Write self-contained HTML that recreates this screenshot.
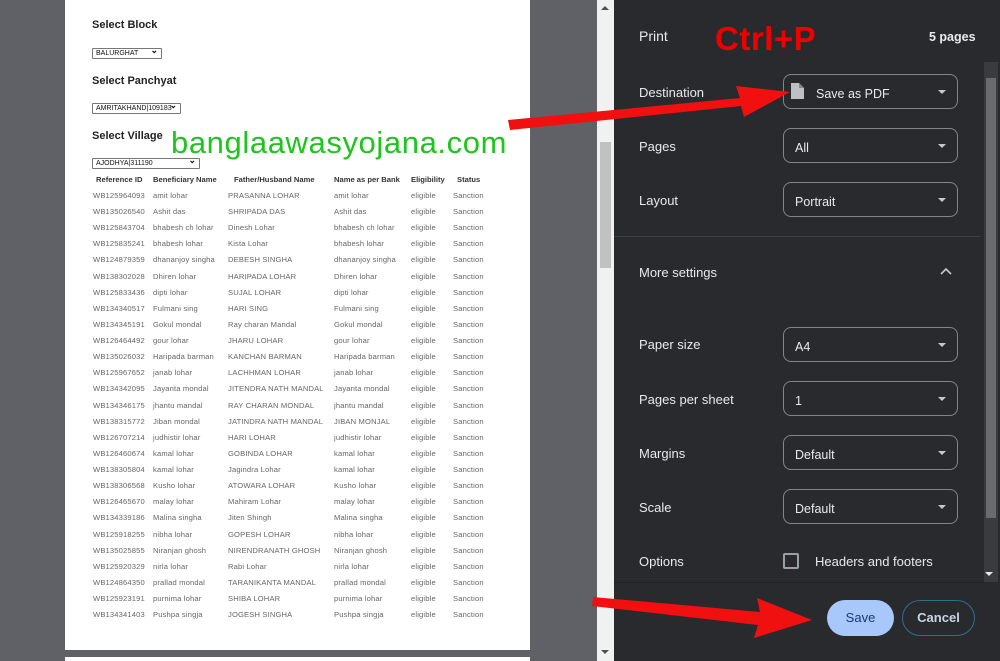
<!DOCTYPE html>
<html><head><meta charset="utf-8"><style>
*{margin:0;padding:0;box-sizing:border-box}
body{width:1000px;height:661px;position:relative;overflow:hidden;background:#5f6167;font-family:"Liberation Sans",sans-serif}
.a{position:absolute}
.page{left:65px;top:0;width:465px;height:650px;background:#fff}
.h{font-weight:bold;font-size:11px;color:#222;left:92px}
.sel{border:1px solid #777;font-size:7px;height:11px;line-height:9px;padding-left:3px;color:#111;background:#fff;left:92px;border-radius:1px}
.sel:after{content:"⌄";position:absolute;right:3px;top:-3px;font-size:9px;font-weight:bold}
.t{font-size:7.6px;color:#666;white-space:nowrap;letter-spacing:.15px}
.th{font-size:7.6px;color:#333;font-weight:bold;white-space:nowrap}
.panel{left:614px;top:0;width:386px;height:661px;background:#292a2d}
.lbl{color:#e8eaed;font-size:13px;left:639px}
.box{left:783px;width:175px;height:35px;border:1px solid #80868b;border-radius:8px;color:#e8eaed;font-size:12.5px;padding:12px 0 0 11px}
.box:after{content:"";position:absolute;right:11px;top:15px;border-left:4px solid transparent;border-right:4px solid transparent;border-top:4px solid #c8c8c8}
</style></head><body>
<div class="a page"></div>
<div class="a" style="left:65px;top:657px;width:465px;height:4px;background:#fff"></div>
<div class="a h" style="top:19px">Select Block</div>
<div class="a sel" style="top:48px;width:70px">BALURGHAT</div>
<div class="a h" style="top:75px">Select Panchyat</div>
<div class="a sel" style="top:103px;width:89px">AMRITAKHAND|109183</div>
<div class="a h" style="top:130px">Select Village</div>
<div class="a sel" style="top:158px;width:108px">AJODHYA|311190</div>
<div class="a" style="left:171px;top:125px;font-size:31px;color:#1fc41f;letter-spacing:0.6px">banglaawasyojana.com</div>
<div id="tbl"></div>
<div class="a" style="left:597px;top:0;width:17px;height:661px;background:#f1f1f1"></div>
<div class="a" style="left:600px;top:142px;width:11px;height:126px;background:#c1c1c1"></div>
<div class="a" style="left:601px;top:6px;border-left:4px solid transparent;border-right:4px solid transparent;border-bottom:4px solid #505050"></div>
<div class="a" style="left:601px;top:650px;border-left:4px solid transparent;border-right:4px solid transparent;border-top:4px solid #505050"></div>
<div class="a panel"></div>
<div class="a" style="left:984px;top:62px;width:14px;height:520px;background:#3a3b3e"></div>
<div class="a" style="left:986px;top:78px;width:10px;height:440px;background:#6a6b6e"></div>
<div class="a" style="left:614px;top:236px;width:366px;height:1px;background:#3c4043"></div>
<div class="a" style="left:614px;top:582px;width:370px;height:1px;background:#202124"></div>
<div class="a lbl" style="top:28px;font-size:14px">Print</div>
<div class="a" style="left:715px;top:20px;font-size:33px;color:#e00;font-weight:bold;letter-spacing:0.5px">Ctrl+P</div>
<div class="a" style="left:929px;top:30px;color:#e8eaed;font-size:12.5px;font-weight:bold">5 pages</div>
<div class="a lbl" style="top:85px">Destination</div>
<div class="a box" style="top:74px;padding-left:32px">Save as PDF</div>
<svg class="a" style="left:791px;top:83px" width="13" height="16"><path d="M0 0H8L13 5V16H0Z" fill="#bdc1c6"/><path d="M8 0V5H13" fill="#888"/></svg>
<div class="a lbl" style="top:139px">Pages</div>
<div class="a box" style="top:128px">All</div>
<div class="a lbl" style="top:193px">Layout</div>
<div class="a box" style="top:182px">Portrait</div>
<div class="a lbl" style="top:265px">More settings</div>
<svg class="a" style="left:940px;top:268px" width="12" height="8"><path d="M1 6L6 1L11 6" stroke="#c8c8c8" stroke-width="1.6" fill="none"/></svg>
<div class="a lbl" style="top:337px">Paper size</div>
<div class="a box" style="top:327px">A4</div>
<div class="a lbl" style="top:392px">Pages per sheet</div>
<div class="a box" style="top:381px">1</div>
<div class="a lbl" style="top:446px">Margins</div>
<div class="a box" style="top:435px">Default</div>
<div class="a lbl" style="top:500px">Scale</div>
<div class="a box" style="top:489px">Default</div>
<div class="a lbl" style="top:554px">Options</div>
<div class="a" style="left:783px;top:553px;width:16px;height:16px;border:2px solid #9aa0a6;border-radius:2px"></div>
<div class="a" style="left:815px;top:554px;color:#e8eaed;font-size:13px">Headers and footers</div>
<div class="a" style="left:985px;top:572px;border-left:4px solid transparent;border-right:4px solid transparent;border-top:4px solid #e8eaed"></div>
<div class="a" style="left:827px;top:600px;width:67px;height:36px;border-radius:18px;background:#a8c7fa;color:#1a3a6f;font-size:13px;text-align:center;line-height:36px">Save</div>
<div class="a" style="left:902px;top:600px;width:73px;height:36px;border-radius:18px;border:1px solid #2f6f8a;color:#c8d6e5;font-size:13px;text-align:center;line-height:34px;font-weight:bold">Cancel</div>
<svg class="a" style="left:0;top:0" width="1000" height="661">
<polygon points="508,120 740,98 736,86 790,92 744,117 741,106 510,130" fill="#f01010"/>
<polygon points="593,597 760,612 757,598 812,620 754,638 758,625 592,606" fill="#f01010"/>
</svg>
<script>
var d=[["WB125964093","amit lohar","PRASANNA LOHAR","amit lohar"],["WB135026540","Ashit das","SHRIPADA DAS","Ashit das"],["WB125843704","bhabesh ch lohar","Dinesh Lohar","bhabesh ch lohar"],["WB125835241","bhabesh lohar","Kista Lohar","bhabesh lohar"],["WB124879359","dhananjoy singha","DEBESH SINGHA","dhananjoy singha"],["WB138302028","Dhiren lohar","HARIPADA LOHAR","Dhiren lohar"],["WB125833436","dipti lohar","SUJAL LOHAR","dipti lohar"],["WB134340517","Fulmani sing","HARI SING","Fulmani sing"],["WB134345191","Gokul mondal","Ray charan Mandal","Gokul mondal"],["WB126464492","gour lohar","JHARU LOHAR","gour lohar"],["WB135026032","Haripada barman","KANCHAN BARMAN","Haripada barman"],["WB125967652","janab lohar","LACHHMAN LOHAR","janab lohar"],["WB134342095","Jayanta mondal","JITENDRA NATH MANDAL","Jayanta mondal"],["WB134346175","jhantu mandal","RAY CHARAN MONDAL","jhantu mandal"],["WB138315772","Jiban mondal","JATINDRA NATH MANDAL","JIBAN MONJAL"],["WB126707214","judhistir lohar","HARI LOHAR","judhistir lohar"],["WB126460674","kamal lohar","GOBINDA LOHAR","kamal lohar"],["WB138305804","kamal lohar","Jagindra Lohar","kamal lohar"],["WB138306568","Kusho lohar","ATOWARA LOHAR","Kusho lohar"],["WB126465670","malay lohar","Mahiram Lohar","malay lohar"],["WB134339186","Malina singha","Jiten Shingh","Malina singha"],["WB125918255","nibha lohar","GOPESH LOHAR","nibha lohar"],["WB135025855","Niranjan ghosh","NIRENDRANATH GHOSH","Niranjan ghosh"],["WB125920329","nirla lohar","Rabi Lohar","nirla lohar"],["WB124864350","prallad mondal","TARANIKANTA MANDAL","prallad mondal"],["WB125923191","purnima lohar","SHIBA LOHAR","purnima lohar"],["WB134341403","Pushpa singja","JOGESH SINGHA","Pushpa singja"]];
var x=[93,153,228,334,411,453],h="";
var hd=["Reference ID","Beneficiary Name","Father/Husband Name","Name as per Bank","Eligibility","Status"];
var hx=[96,153,234,334,411,457];
hd.forEach(function(s,i){h+='<div class="a th" style="left:'+hx[i]+'px;top:175px">'+s+'</div>'});
d.forEach(function(r,j){var y=191+j*16.12;r=r.concat(["eligible","Sanction"]);r.forEach(function(s,i){h+='<div class="a t" style="left:'+x[i]+'px;top:'+y+'px">'+s+'</div>'})});
document.getElementById("tbl").innerHTML=h;
</script>
</body></html>
